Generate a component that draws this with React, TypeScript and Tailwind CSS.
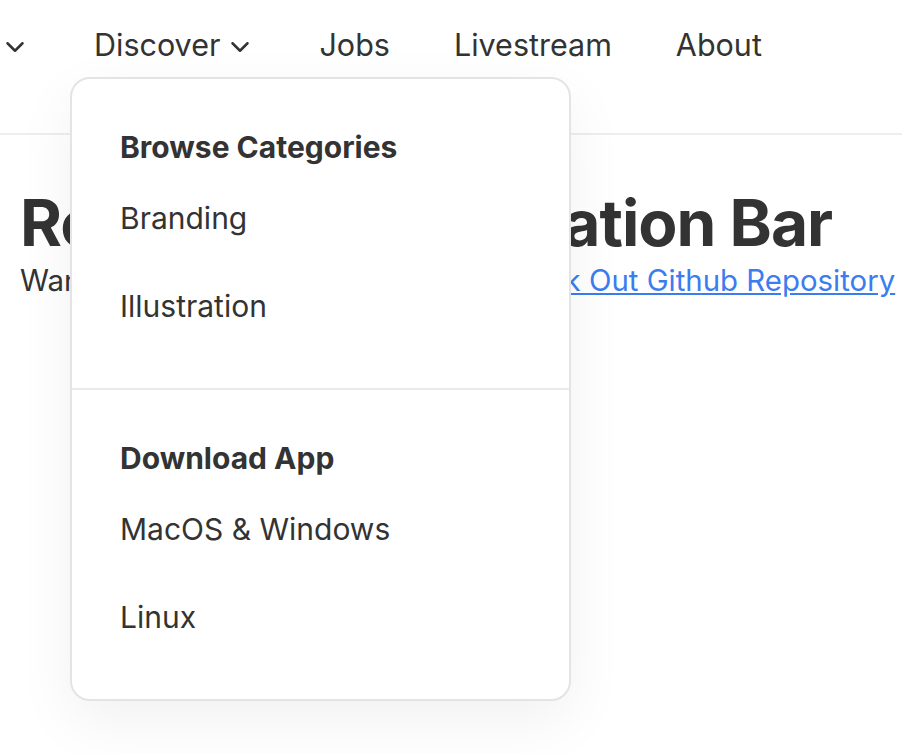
import { ChevronDown } from 'lucide-react';

const groups = [
  { title: 'Browse Categories', items: ['Branding', 'Illustration'] },
  { title: 'Download App', items: ['MacOS & Windows', 'Linux'] },
];

function NavItem({ label, dropdown }: { label: string; dropdown?: boolean }) {
  return (
    <div className="flex shrink-0 items-center gap-[5px]">
      <span>{label}</span>
      {dropdown && <ChevronDown size={30} strokeWidth={2} className="mt-[3px] shrink-0" />}
    </div>
  );
}

export default function App() {
  return (
    <div className="min-h-[754px] overflow-hidden bg-white text-[#333]" style={{ fontFamily: 'Inter, sans-serif' }}>
      {/* Header */}
      <header className="h-[135px] border-b-2 border-[#eee]">
        <nav className="relative flex items-center gap-[64px] pl-[30px] pt-[24px] text-[30.5px] leading-[42px]">
          {/* scrolled-off first item */}
          <div className="flex w-0 shrink-0 justify-end">
            <NavItem label="Home" dropdown />
          </div>
          <div className="relative">
            <NavItem label="Discover" dropdown />
            {/* Dropdown */}
            <div className="absolute left-[-24px] top-[53px] z-10 w-[501px] rounded-[20px] border-2 border-[#e4e4e4] bg-white shadow-[0_20px_60px_rgba(0,0,0,0.06)]">
              {groups.map((g, gi) => (
                <div key={g.title} className={gi > 0 ? 'border-t-2 border-[#eaeaea]' : ''}>
                  <div className="px-[48px] pt-[50px] pb-[38px]">
                    <p className="mb-[9px] text-[30px] font-bold leading-[36px]">{g.title}</p>
                    {g.items.map((item) => (
                      <p key={item} className="py-[24px] text-[30px] leading-[40px]">{item}</p>
                    ))}
                  </div>
                </div>
              ))}
            </div>
          </div>
          <NavItem label="Jobs" />
          <NavItem label="Livestream" />
          <NavItem label="About" />
        </nav>
      </header>

      {/* Content */}
      <main className="px-[20px] pt-[50px]">
        <h1 className="whitespace-nowrap text-[64px] font-bold leading-[76px] tracking-[-1px]">Responsive Navigation Bar</h1>
        <p className="mt-[2px] whitespace-nowrap text-[29.4px] leading-[36px]">
          Want to see the full source code?{' '}
          <a href="#" className="text-[#3b7cf0] underline">Check Out Github Repository</a>
        </p>
      </main>
    </div>
  );
}
